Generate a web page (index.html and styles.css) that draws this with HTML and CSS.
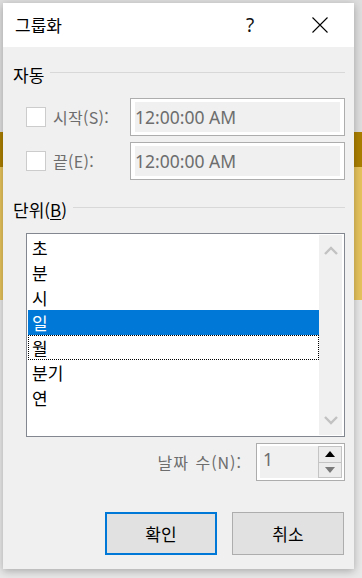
FILE: index.html
```html
<!DOCTYPE html>
<html lang="ko">
<head>
<meta charset="utf-8">
<link rel="stylesheet" href="styles.css">
</head>
<body>
<div class="dialog">
  <div class="titlebar">
    <span class="title">그룹화</span>
    <span class="help">?</span>
    <span class="close">
      <svg width="16" height="16" viewBox="0 0 16 16"><path d="M0.5 0.5 L15.5 15.5 M15.5 0.5 L0.5 15.5" stroke="#000" stroke-width="1.1" fill="none"/></svg>
    </span>
  </div>
  <div class="content">
    <div class="group-head"><span class="gtitle">자동</span><div class="rule"></div></div>
    <div class="auto-rows">
      <div class="row">
        <span class="check"></span>
        <span class="lbl">시작(S):</span>
        <div class="tbox"><div class="tinner">12:00:00 AM</div></div>
      </div>
      <div class="row">
        <span class="check"></span>
        <span class="lbl">끝(E):</span>
        <div class="tbox"><div class="tinner">12:00:00 AM</div></div>
      </div>
    </div>
    <div class="group-head unit"><span class="gtitle">단위(<u>B</u>)</span><div class="rule"></div></div>
    <div class="listbox">
      <div class="items">
        <div class="item">초</div>
        <div class="item">분</div>
        <div class="item">시</div>
        <div class="item selected">일</div>
        <div class="item focused">월</div>
        <div class="item">분기</div>
        <div class="item">연</div>
      </div>
      <div class="scroll">
        <svg width="14" height="9" viewBox="0 0 14 9"><path d="M1 8 L7 2 L13 8" stroke="#c2c2c2" stroke-width="2.4" fill="none"/></svg>
        <svg width="14" height="9" viewBox="0 0 14 9"><path d="M1 1 L7 7 L13 1" stroke="#c2c2c2" stroke-width="2.4" fill="none"/></svg>
      </div>
    </div>
    <div class="spinrow">
      <span class="lbl2">날짜 수(N):</span>
      <div class="spinbox">
        <div class="spinval">1</div>
        <div class="spinbtns">
          <div class="sbtn"><svg width="10" height="6" viewBox="0 0 10 6"><path d="M0 6 L5 0 L10 6 Z" fill="#000"/></svg></div>
          <div class="sbtn"><svg width="10" height="6" viewBox="0 0 10 6"><path d="M0 0 L5 6 L10 0 Z" fill="#7a7a7a"/></svg></div>
        </div>
      </div>
    </div>
    <div class="buttons">
      <button class="btn primary">확인</button>
      <button class="btn">취소</button>
    </div>
  </div>
</div>
</body>
</html>
```
FILE: styles.css
```css
html, body {
  margin: 0;
  padding: 0;
}
body {
  width: 362px;
  height: 578px;
  overflow: hidden;
  background: linear-gradient(to bottom, #dedede 0, #dedede 132px, #ab7f00 132px, #ab7f00 167px, #e6c35c 167px, #e6c35c 300px, #e8e8e8 300px);
  font-family: "Noto Sans CJK KR", "Noto Sans", sans-serif;
}
.dialog {
  margin: 3px 0 0 3px;
  width: 351px;
  height: 566px;
  background: #f0f0f0;
  box-shadow: 0 2px 8px rgba(0,0,0,0.28);
  display: flex;
  flex-direction: column;
}
.titlebar {
  height: 44px;
  background: #fff;
  display: flex;
  align-items: center;
  padding-left: 12px;
  flex: none;
}
.title {
  font-size: 17px;
  color: #000;
  flex: 1;
  line-height: 20px;
}
.help {
  font-family: "Noto Sans", sans-serif;
  font-size: 19px;
  line-height: 20px;
  width: 20px;
  text-align: center;
  margin-right: 52px;
  color: #111;
}
.close {
  width: 16px;
  height: 16px;
  display: flex;
  margin-right: 26px;
  margin-top: -1px;
}
.content {
  flex: 1;
  display: flex;
  flex-direction: column;
  padding: 18px 9px 14px 10px;
}
.group-head {
  display: flex;
  align-items: center;
  height: 20px;
}
.gtitle {
  font-size: 17px;
  line-height: 20px;
  color: #000;
  white-space: nowrap;
}
.gtitle u {
  text-underline-offset: 2px;
}
.rule {
  flex: 1;
  height: 1px;
  background: #d8d8d8;
  margin-left: 6px;
  margin-top: -6px;
}
.auto-rows {
  margin-top: 13px;
  display: flex;
  flex-direction: column;
  gap: 6px;
}
.row {
  display: flex;
  align-items: center;
  height: 38px;
  padding-left: 13px;
}
.check {
  width: 18px;
  height: 18px;
  border: 1px solid #cccccc;
  background: #fff;
  flex: none;
}
.lbl {
  width: 77px;
  margin-left: 7px;
  font-size: 16px;
  letter-spacing: 0.3px;
  color: #6d6d6d;
  white-space: nowrap;
}
.tbox {
  flex: 1;
  border: 1px solid #adadad;
  background: #fff;
  padding: 3px 4px 3px 4px;
  box-sizing: border-box;
  height: 38px;
}
.tinner {
  height: 100%;
  background: #f0f0f0;
  color: #6d6d6d;
  font-family: "Noto Sans", sans-serif;
  font-size: 17.5px;
  display: flex;
  align-items: center;
  padding-left: 0;
}
.group-head.unit {
  margin-top: 20px;
}
.listbox {
  margin-top: 13px;
  margin-left: 13px;
  height: 204px;
  box-sizing: border-box;
  border: 1px solid #828790;
  background: #fff;
  padding: 1px;
  display: flex;
}
.items {
  flex: 1;
  display: flex;
  flex-direction: column;
}
.item {
  height: 25px;
  line-height: 25px;
  padding-left: 4px;
  font-size: 17px;
  color: #000;
  box-sizing: border-box;
}
.item.selected {
  background: #0078d7;
  color: #fff;
}
.item.focused {
  border: 1px dotted #000;
  line-height: 23px;
  padding-left: 3px;
}
.scroll {
  width: 23px;
  background: #f0f0f0;
  display: flex;
  flex-direction: column;
  justify-content: space-between;
  align-items: center;
  padding: 11px 0 10px;
  margin-right: 1px;
}
.spinrow {
  margin-top: 6px;
  display: flex;
  justify-content: flex-end;
  align-items: center;
  height: 38px;
  gap: 14px;
}
.lbl2 {
  font-size: 16px;
  letter-spacing: 1px;
  word-spacing: 1px;
  color: #6d6d6d;
}
.spinbox {
  width: 89px;
  height: 38px;
  box-sizing: border-box;
  border: 1px solid #adadad;
  background: #fff;
  padding: 2px 2px 2px 3px;
  display: flex;
}
.spinval {
  flex: 1;
  background: #f0f0f0;
  color: #6d6d6d;
  font-family: "Noto Sans", sans-serif;
  font-size: 17.5px;
  line-height: 26px;
  padding-left: 3px;
}
.spinbtns {
  width: 24px;
  display: flex;
  flex-direction: column;
}
.sbtn {
  flex: 1;
  box-sizing: border-box;
  border: 1px solid #c4c4c4;
  background: #ececec;
  display: flex;
  align-items: center;
  justify-content: center;
}
.sbtn + .sbtn {
  border-top: none;
}
.buttons {
  margin-top: auto;
  display: flex;
  justify-content: flex-end;
  gap: 15px;
  padding-right: 1px;
}
.btn {
  width: 112px;
  height: 43px;
  background: #e1e1e1;
  border: 1px solid #adadad;
  font-family: "Noto Sans CJK KR", sans-serif;
  font-size: 17px;
  color: #000;
  padding: 0;
  margin: 0;
}
.btn.primary {
  border: 2px solid #0078d7;
}
```
